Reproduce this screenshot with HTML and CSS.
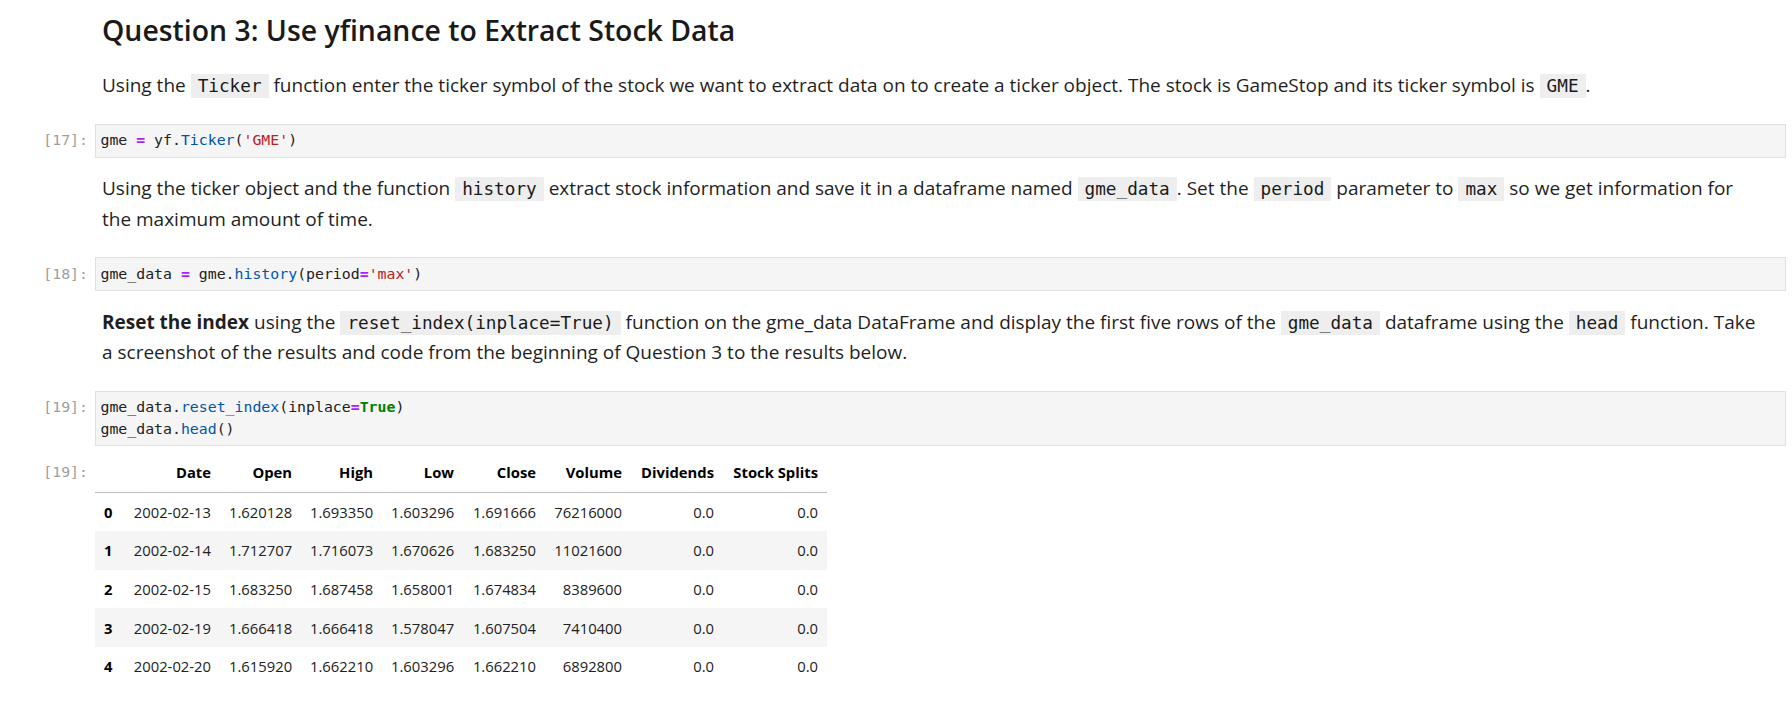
FILE: index.html
```html
<!DOCTYPE html>
<html lang="en">
<head>
<meta charset="utf-8">
<title>Question 3: Use yfinance to Extract Stock Data</title>
<link rel="stylesheet" href="styles.css">
</head>
<body>
<div class="notebook">

  <div class="cell md first">
    <div class="prompt"></div>
    <div class="md-body">
      <h2>Question 3: Use yfinance to Extract Stock Data</h2>
      <p>Using the <code>Ticker</code> function enter the ticker symbol of the stock we want to extract data on to create a ticker object. The stock is GameStop and its ticker symbol is <code>GME</code>.</p>
    </div>
  </div>

  <div class="cell code">
    <div class="prompt">[17]:</div>
    <div class="editor"><pre>gme <span class="op">=</span> yf.<span class="prop">Ticker</span>(<span class="str">'GME'</span>)</pre></div>
  </div>

  <div class="cell md">
    <div class="prompt"></div>
    <div class="md-body">
      <p>Using the ticker object and the function <code>history</code> extract stock information and save it in a dataframe named <code>gme_data</code>. Set the <code>period</code> parameter to <code>max</code> so we get information for the maximum amount of time.</p>
    </div>
  </div>

  <div class="cell code">
    <div class="prompt">[18]:</div>
    <div class="editor"><pre>gme_data <span class="op">=</span> gme.<span class="prop">history</span>(period<span class="op">=</span><span class="str">'max'</span>)</pre></div>
  </div>

  <div class="cell md">
    <div class="prompt"></div>
    <div class="md-body">
      <p><strong>Reset the index</strong> using the <code>reset_index(inplace=True)</code> function on the gme_data DataFrame and display the first five rows of the <code>gme_data</code> dataframe using the <code>head</code> function. Take a screenshot of the results and code from the beginning of Question 3 to the results below.</p>
    </div>
  </div>

  <div class="cell code">
    <div class="prompt">[19]:</div>
    <div class="editor"><pre>gme_data.<span class="prop">reset_index</span>(inplace<span class="op">=</span><span class="kw">True</span>)
gme_data.<span class="prop">head</span>()</pre></div>
  </div>

  <div class="cell output">
    <div class="prompt out-prompt">[19]:</div>
    <div class="output-body">
      <table class="df">
        <thead>
          <tr>
            <th class="c-idx"></th>
            <th class="c-date">Date</th>
            <th class="c-num">Open</th>
            <th class="c-num">High</th>
            <th class="c-num">Low</th>
            <th class="c-close">Close</th>
            <th class="c-vol">Volume</th>
            <th class="c-div">Dividends</th>
            <th class="c-split">Stock Splits</th>
          </tr>
        </thead>
        <tbody>
          <tr><th>0</th><td>2002-02-13</td><td>1.620128</td><td>1.693350</td><td>1.603296</td><td>1.691666</td><td>76216000</td><td>0.0</td><td>0.0</td></tr>
          <tr><th>1</th><td>2002-02-14</td><td>1.712707</td><td>1.716073</td><td>1.670626</td><td>1.683250</td><td>11021600</td><td>0.0</td><td>0.0</td></tr>
          <tr><th>2</th><td>2002-02-15</td><td>1.683250</td><td>1.687458</td><td>1.658001</td><td>1.674834</td><td>8389600</td><td>0.0</td><td>0.0</td></tr>
          <tr><th>3</th><td>2002-02-19</td><td>1.666418</td><td>1.666418</td><td>1.578047</td><td>1.607504</td><td>7410400</td><td>0.0</td><td>0.0</td></tr>
          <tr><th>4</th><td>2002-02-20</td><td>1.615920</td><td>1.662210</td><td>1.603296</td><td>1.662210</td><td>6892800</td><td>0.0</td><td>0.0</td></tr>
        </tbody>
      </table>
    </div>
  </div>

</div>
</body>
</html>
```
FILE: styles.css
```css
html, body {
  margin: 0;
  padding: 0;
  background: #ffffff;
}

body {
  font-family: "Open Sans", "Noto Sans", sans-serif;
  color: #212121;
}

.notebook {
  padding-right: 6px;
}

.cell {
  display: flex;
  align-items: flex-start;
}

.prompt {
  flex: 0 0 95px;
  box-sizing: border-box;
  padding-right: 7px;
  text-align: right;
  font-family: "DejaVu Sans Mono", "Liberation Mono", monospace;
  font-size: 14.85px;
  line-height: 21.2px;
  color: #9e9e9e;
}

.code .prompt {
  padding-top: 6.5px;
}

.out-prompt {
  padding-top: 16px;
}

/* Markdown cells */
.md-body {
  flex: 1 1 auto;
  min-width: 0;
  padding: 15.5px 22px 23px 7px;
}

.first .md-body {
  padding-top: 12px;
}

.md-body h2 {
  margin: 0 0 22px 0;
  font-size: 28.4px;
  font-weight: 600;
  line-height: 36px;
  color: #1a1a1a;
}

.md-body p {
  margin: 0;
  font-size: 19px;
  line-height: 30.5px;
  color: #1f1f1f;
}

.md-body strong {
  font-weight: 700;
}

.md-body code {
  font-family: "DejaVu Sans Mono", "Liberation Mono", monospace;
  font-size: 17.7px;
  line-height: 1;
  background: #eeeeee;
  padding: 2px 7px;
  color: #1a1a1a;
}

/* Code cells */
.editor {
  flex: 1 1 auto;
  min-width: 0;
  border: 1px solid #e0e0e0;
  background: #f5f5f5;
  padding: 5.5px 5px 5.5px 4.5px;
}

.editor pre {
  margin: 0;
  font-family: "DejaVu Sans Mono", "Liberation Mono", monospace;
  font-size: 14.85px;
  line-height: 21.2px;
  color: #212121;
}

.op {
  color: #aa22ff;
  font-weight: 700;
}

.prop {
  color: #0055aa;
}

.str {
  color: #ba2121;
}

.kw {
  color: #008000;
  font-weight: 700;
}

/* Output */
.output-body {
  flex: 1 1 auto;
  padding-top: 6.7px;
}

.df {
  border-collapse: collapse;
  table-layout: fixed;
  width: 732px;
  font-size: 14.8px;
  line-height: 20px;
  color: #212121;
}

.df th,
.df td {
  box-sizing: border-box;
  padding: 9.3px 9px;
  text-align: right;
  vertical-align: middle;
  white-space: nowrap;
}

.df th {
  font-weight: 700;
  color: #000000;
}

.df thead th {
  border-bottom: 1px solid #bdbdbd;
}

.df tbody tr:nth-child(even) {
  background: #f5f5f5;
}

.df tbody th {
  text-align: left;
}

.c-idx { width: 25px; }
.c-date { width: 100px; }
.c-num { width: 81px; }
.c-close { width: 82px; }
.c-vol { width: 86px; }
.c-div { width: 92px; }
.c-split { width: 104px; }
```
